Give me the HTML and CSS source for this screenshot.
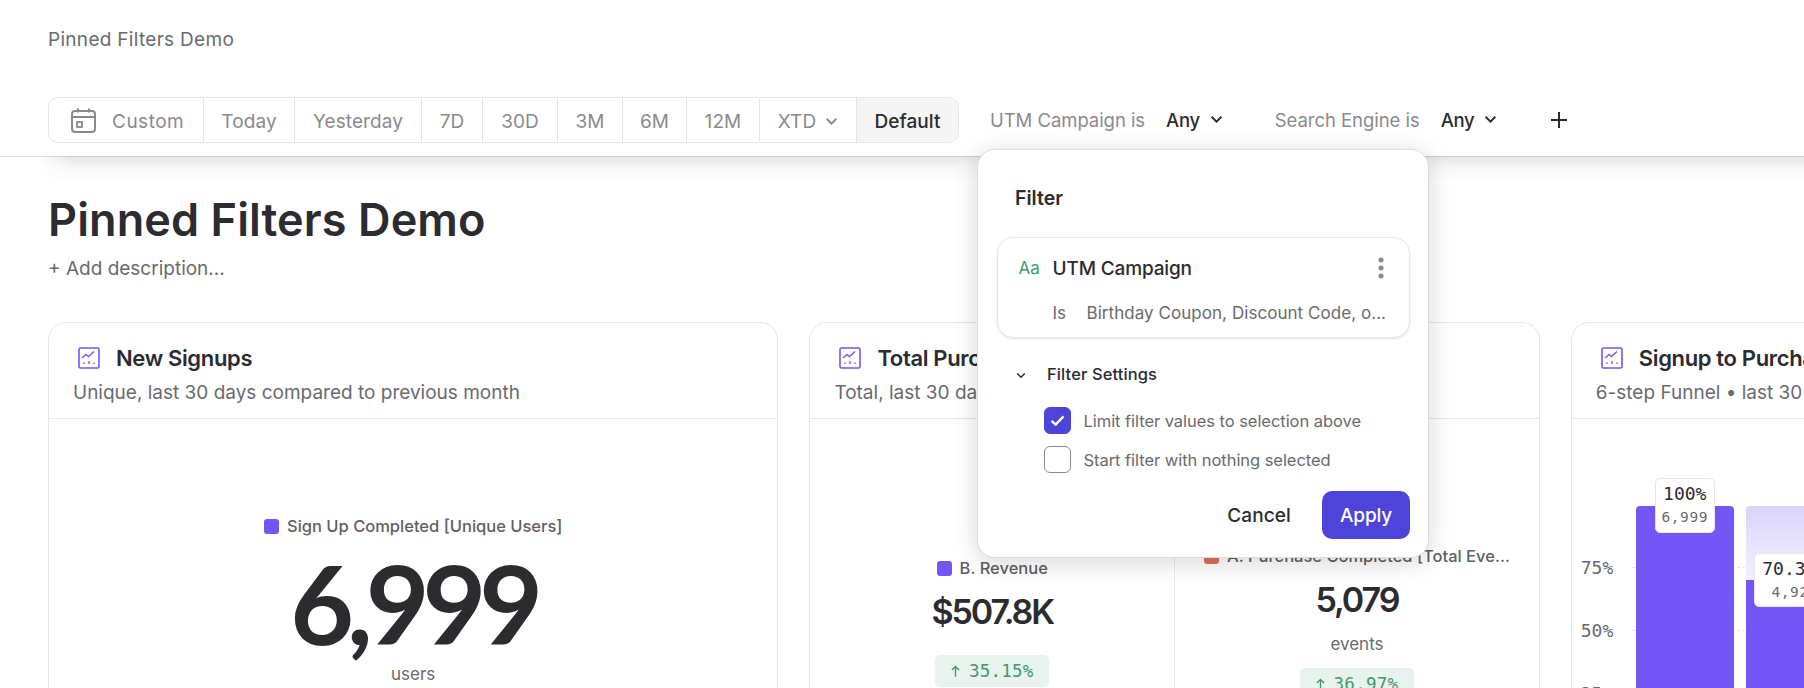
FILE: index.html
```html
<!DOCTYPE html>
<html lang="en">
<head>
<meta charset="utf-8">
<title>Pinned Filters Demo</title>
<link rel="stylesheet" href="styles.css">
</head>
<body>
<header class="topbar">
  <div class="crumb">Pinned Filters Demo</div>
  <div class="toolbar">
    <div class="dates">
      <div class="seg seg-custom">
        <svg class="cal" viewBox="0 0 25 25" fill="none" stroke="currentColor" stroke-width="2"><rect x="1" y="3" width="23" height="21" rx="3"/><path d="M1 9h23M7 0.5v4M18 0.5v4"/><rect x="6" y="14" width="5" height="5" stroke-width="1.8"/></svg>
        <span>Custom</span>
      </div>
      <div class="seg w-today">Today</div>
      <div class="seg w-yest">Yesterday</div>
      <div class="seg w-7d">7D</div>
      <div class="seg w-30d">30D</div>
      <div class="seg w-3m">3M</div>
      <div class="seg w-6m">6M</div>
      <div class="seg w-12m">12M</div>
      <div class="seg w-xtd">XTD
        <svg class="chev-sm" viewBox="0 0 12 8" fill="none" stroke="currentColor" stroke-width="1.800"><path d="M1.5 1.5 6 6l4.5-4.5"/></svg>
      </div>
      <div class="seg seg-default">Default</div>
    </div>
    <div class="pin pin-utm">
      <span class="pin-label">UTM Campaign is</span>
      <span class="pin-val">Any</span>
      <svg class="chev" viewBox="0 0 12 8" fill="none" stroke="currentColor" stroke-width="1.800"><path d="M1.5 1.5 6 6l4.5-4.5"/></svg>
    </div>
    <div class="pin pin-search">
      <span class="pin-label">Search Engine is</span>
      <span class="pin-val">Any</span>
      <svg class="chev" viewBox="0 0 12 8" fill="none" stroke="currentColor" stroke-width="1.800"><path d="M1.5 1.5 6 6l4.5-4.5"/></svg>
    </div>
    <svg class="plus" viewBox="0 0 18 18" fill="none" stroke="currentColor" stroke-width="2"><path d="M9 1v16M1 9h16"/></svg>
  </div>
</header>

<main class="page">
  <h1 class="title">Pinned Filters Demo</h1>
  <div class="desc">+ Add description...</div>

  <div class="cards">
    <section class="card">
      <div class="card-head">
        <div class="card-title">
          <svg class="chart-ic" viewBox="0 0 22 22" fill="none" stroke="#7356f5"><rect x="1" y="1" width="20" height="20" rx="1.5" stroke-width="1.6"/><path d="M4 11l4-3.500 2.500 2L16 4.500" stroke-width="1.4"/><path d="M6 17v-1.500M11 17v-3M16 17v-1.500" stroke-width="1.4"/></svg>
          <span>New Signups</span>
        </div>
        <div class="card-sub">Unique, last 30 days compared to previous month</div>
      </div>
      <div class="card-body single">
        <div class="legend"><i class="sq sq-purple"></i>Sign Up Completed [Unique Users]</div>
        <div class="big">6,999</div>
        <div class="unit">users</div>
      </div>
    </section>

    <section class="card">
      <div class="card-head">
        <div class="card-title">
          <svg class="chart-ic" viewBox="0 0 22 22" fill="none" stroke="#7356f5"><rect x="1" y="1" width="20" height="20" rx="1.5" stroke-width="1.6"/><path d="M4 11l4-3.500 2.500 2L16 4.500" stroke-width="1.4"/><path d="M6 17v-1.500M11 17v-3M16 17v-1.500" stroke-width="1.4"/></svg>
          <span>Total Purchases &amp; Revenue</span>
        </div>
        <div class="card-sub">Total, last 30 days compared to previous month</div>
      </div>
      <div class="card-body split">
        <div class="col col-left">
          <div class="legend"><i class="sq sq-purple"></i>B. Revenue</div>
          <div class="mid">$507.8K</div>
          <div class="delta d-left"><svg class="up" viewBox="0 0 10 13" fill="none" stroke="currentColor" stroke-width="1.500"><path d="M5 13V1.500M1 5.500l4-4 4 4"/></svg>35.15%</div>
        </div>
        <div class="col col-right">
          <div class="legend"><i class="sq sq-red"></i><span class="clip">A. Purchase Completed [Total Eve...</span></div>
          <div class="mid">5,079</div>
          <div class="unit unit-sm">events</div>
          <div class="delta d-right"><svg class="up" viewBox="0 0 10 13" fill="none" stroke="currentColor" stroke-width="1.500"><path d="M5 13V1.500M1 5.500l4-4 4 4"/></svg>36.97%</div>
        </div>
      </div>
    </section>

    <section class="card">
      <div class="card-head">
        <div class="card-title">
          <svg class="chart-ic" viewBox="0 0 22 22" fill="none" stroke="#7356f5"><rect x="1" y="1" width="20" height="20" rx="1.5" stroke-width="1.6"/><path d="M4 11l4-3.500 2.500 2L16 4.500" stroke-width="1.4"/><path d="M6 17v-1.500M11 17v-3M16 17v-1.500" stroke-width="1.4"/></svg>
          <span>Signup to Purchase Funnel</span>
        </div>
        <div class="card-sub">6-step Funnel • last 30 days</div>
      </div>
      <div class="card-body funnel">
        <div class="axis">
          <span class="tick t75">75%</span>
          <span class="tick t50">50%</span>
          <span class="tick t25">25%</span>
        </div>
        <div class="plot">
          <div class="grid g75"></div>
          <div class="grid g50"></div>
          <div class="bar bar1">
            <div class="tip tip1"><b>100%</b><small>6,999</small></div>
          </div>
          <div class="bar bar2">
            <div class="ghost"></div>
            <div class="solid"></div>
            <div class="tip tip2"><b>70.35%</b><small>4,924</small></div>
          </div>
        </div>
      </div>
    </section>
  </div>
</main>

<aside class="pop">
  <div class="pop-title">Filter</div>
  <div class="fcard">
    <div class="frow">
      <span class="aa">Aa</span>
      <span class="fname">UTM Campaign</span>
      <svg class="dots" viewBox="0 0 6 22" fill="#8a8a8e"><circle cx="3" cy="3" r="2.500"/><circle cx="3" cy="11" r="2.500"/><circle cx="3" cy="19" r="2.500"/></svg>
    </div>
    <div class="frow2"><span class="is">Is</span><span class="vals">Birthday Coupon, Discount Code, o...</span></div>
  </div>
  <div class="fset">
    <svg class="chev-xs" viewBox="0 0 12 8" fill="none" stroke="currentColor" stroke-width="1.800"><path d="M1.500 1.500 6 6l4.500-4.500"/></svg>
    <span>Filter Settings</span>
  </div>
  <div class="opt opt-first">
    <span class="box on"><svg viewBox="0 0 16 12" fill="none" stroke="#fff" stroke-width="2.600"><path d="M1.500 6.500 6 10.500l8.500-9"/></svg></span>
    <span>Limit filter values to selection above</span>
  </div>
  <div class="opt">
    <span class="box"></span>
    <span>Start filter with nothing selected</span>
  </div>
  <div class="actions">
    <span class="cancel">Cancel</span>
    <span class="apply">Apply</span>
  </div>
</aside>
</body>
</html>
```
FILE: styles.css
```css
* { box-sizing: border-box; }
html, body { margin: 0; padding: 0; height: 688px; overflow: hidden; background: #fff; }
body { font-family: Inter, "Liberation Sans", sans-serif; color: #2b2b30; width: 1804px; position: relative; }

.topbar { height: 157px; padding: 0 0 0 48px; border-bottom: 1px solid #e2e2e4; background: #fff; position: relative; z-index: 1; }
.topbar::after { content: ""; position: absolute; left: 36px; right: 0; top: 100%; height: 26px; background: linear-gradient(rgba(0,0,0,.1), rgba(0,0,0,.03) 45%, transparent); -webkit-mask-image: linear-gradient(90deg, transparent, #000 34px); mask-image: linear-gradient(90deg, transparent, #000 34px); }
.crumb { height: 97px; padding-top: 28px; font-size: 19px; line-height: 24px; color: #6a6a6e; letter-spacing: .3px; }
.toolbar { display: flex; align-items: center; height: 46px; }

.dates { display: flex; width: 911px; height: 46px; border: 1px solid #e6e6e8; border-radius: 10px; overflow: hidden; font-size: 19px; color: #8a8a8e; flex: none; }
.seg { display: flex; align-items: center; justify-content: center; border-right: 1px solid #e6e6e8; letter-spacing: .1px; flex: none; padding-top: 2px; }
.seg-custom { width: 155px; gap: 16px; justify-content: flex-start; padding-left: 22px; padding-top: 0; }
.seg-custom span { letter-spacing: .5px; padding-top: 2px; }
.cal { width: 25px; height: 25px; flex: none; }
.w-today { width: 91px; }
.w-yest { width: 127px; }
.w-7d { width: 61px; }
.w-30d { width: 75px; }
.w-3m { width: 65px; }
.w-6m { width: 64px; }
.w-12m { width: 73px; }
.w-xtd { width: 97px; gap: 9px; }
.seg-default { flex: 1; background: #f5f5f6; color: #2b2b30; border-right: 0; font-weight: 500; }
.chev-sm { width: 13px; height: 9px; }

.pin { display: flex; align-items: center; font-size: 18.500px; flex: none; margin-top: -1px; }
.pin-label { color: #8a8a8e; letter-spacing: -.05px; }
.pin-val { color: #2b2b30; margin-left: 21px; font-weight: 500; letter-spacing: -.3px; }
.chev { width: 13px; height: 9px; margin-left: 10px; color: #2b2b30; }
.pin-utm { margin-left: 31px; }
.pin-search { margin-left: 52px; }
.plus { width: 18px; height: 18px; margin-left: 53px; color: #2b2b30; margin-top: -1px; }

.page { padding: 0 0 0 48px; }
.title { margin: 0; padding-top: 36px; font-size: 45px; line-height: 54px; font-weight: 600; letter-spacing: .1px; color: #2b2b30; }
.desc { margin-top: 10px; font-size: 19px; line-height: 24px; color: #6a6a6e; letter-spacing: 0; }

.cards { display: flex; gap: 31px; margin-top: 41px; width: 2300px; }
.card { width: 730.400px; height: 500px; border: 1px solid #e6e6e8; border-radius: 18px; flex: none; background: #fff; }
.card-head { height: 96px; border-bottom: 1px solid #e6e6e8; padding: 17px 0 0 24px; overflow: hidden; }
.card-title { display: flex; align-items: center; gap: 16px; padding-left: 5px; height: 36px; font-size: 22px; font-weight: 600; letter-spacing: -.35px; }
.chart-ic { width: 22px; height: 22px; flex: none; }
.card-sub { margin-top: 5px; font-size: 19px; line-height: 24px; color: #6a6a6e; letter-spacing: 0; white-space: nowrap; }

.legend { display: flex; align-items: center; justify-content: center; gap: 8px; font-size: 16.500px; line-height: 24px; color: #5f5f64; letter-spacing: 0; white-space: nowrap; font-weight: 500; }
.sq { width: 15px; height: 15px; border-radius: 3px; flex: none; }
.sq-purple { background: #7356f5; }
.sq-red { background: #e0705a; }

.single { text-align: center; padding-top: 95px; }
.big { font-family: Lato, Inter, sans-serif; font-size: 110px; line-height: 128px; font-weight: 700; letter-spacing: -7px; color: #2b2b30; margin-top: 0; }
.unit { font-size: 17px; line-height: 24px; color: #6a6a6e; }
.single .unit { margin-top: -4px; }

.split { display: flex; }
.col { flex: 1; height: 400px; text-align: center; }
.col-left { padding-top: 137px; border-right: 1px solid #ececee; }
.col-right { padding-top: 125px; }
.mid { font-size: 34px; line-height: 44px; font-weight: 600; letter-spacing: -2.100px; margin-top: 10px; color: #2b2b30; }
.col-right .legend { justify-content: flex-start; padding-left: 29px; }
.unit-sm { margin-top: 10px; }
.delta { display: flex; align-items: center; justify-content: center; gap: 9px; margin: 0 auto; font-family: "DejaVu Sans Mono", monospace; font-size: 17.500px; letter-spacing: .25px; line-height: 32px; height: 32px; color: #3f9a6c; background: #e9f3ee; border-radius: 5px; }
.up { width: 9px; height: 12px; flex: none; }
.d-left { width: 114px; margin-top: 21px; }
.d-right { width: 114px; margin-top: 12px; }

.funnel { position: relative; display: flex; height: 400px; }
.axis { width: 60px; flex: none; position: relative; }
.tick { position: absolute; left: 9px; font-family: "DejaVu Sans Mono", monospace; font-size: 18px; line-height: 20px; color: #6a6a6e; }
.t75 { top: 139px; }
.t50 { top: 202px; }
.t25 { top: 265px; }
.plot { position: relative; flex: 1; display: flex; gap: 12px; padding-left: 4px; padding-top: 87px; }
.grid { position: absolute; left: 0; right: 0; border-top: 1px dashed #e6e6e8; }
.g75 { top: 148px; }
.g50 { top: 211px; }
.bar { position: relative; width: 98px; flex: none; height: 313px; border-radius: 4px 4px 0 0; }
.bar1 { background: #7356f5; }
.ghost { position: absolute; left: 0; right: 0; top: 0; height: 74px; border-radius: 4px 4px 0 0; background: linear-gradient(#d9d3fb, #f4f2fe); }
.solid { position: absolute; left: 0; right: 0; top: 74px; bottom: 0; background: #7356f5; }
.tip { position: absolute; background: #fff; border: 1px solid #e6e6e8; border-radius: 5px; font-family: "DejaVu Sans Mono", monospace; text-align: center; }
.tip b { display: block; font-weight: 400; font-size: 18px; line-height: 24px; color: #2b2b30; }
.tip small { display: block; font-size: 14.500px; line-height: 22px; color: #6a6a6e; letter-spacing: .6px; }
.tip1 { left: 19px; top: -28px; width: 60px; height: 55px; padding-top: 3px; }
.tip2 { left: 8px; top: 47px; width: 82px; height: 54px; padding-top: 3px; }

.pop { position: absolute; left: 977px; top: 149px; width: 452px; height: 409px; background: #fff; border: 1px solid #dcdcde; border-radius: 18px; box-shadow: 0 4px 24px rgba(0,0,0,.17); z-index: 5; padding: 0 18px 0 18.500px; }
.pop-title { padding: 35px 0 0 18.500px; font-size: 19.500px; line-height: 26px; font-weight: 600; letter-spacing: 0; }
.fcard { margin-top: 26px; height: 101px; border: 1px solid #e6e6e8; border-radius: 16px; box-shadow: 0 1px 2px rgba(0,0,0,.12); padding: 0 0 0 21px; }
.frow { display: flex; align-items: center; height: 60px; }
.aa { width: 34px; font-size: 17px; color: #3f9a6c; }
.fname { flex: 1; font-size: 19px; font-weight: 500; letter-spacing: -.15px; }
.dots { width: 6px; height: 22px; margin-right: 25px; }
.frow2 { display: flex; padding-left: 34px; font-size: 17px; line-height: 24px; color: #6a6a6e; letter-spacing: .05px; margin-top: 3px; }
.is { width: 34px; }
.fset { display: flex; align-items: center; margin: 24px 0 0 19px; height: 24px; font-size: 16.500px; font-weight: 500; color: #2b2b30; gap: 21.500px; letter-spacing: .1px; }
.chev-xs { width: 10px; height: 7px; margin-top: 3px; }
.opt { display: flex; align-items: center; gap: 13px; margin-left: 47px; height: 27px; margin-top: 12px; font-size: 16.500px; color: #6a6a6e; letter-spacing: -.05px; }
.opt-first { margin-top: 21px; }
.box { display: flex; align-items: center; justify-content: center; width: 27px; height: 27px; border: 1px solid #8a8a8e; border-radius: 6px; flex: none; }
.box.on { background: #4d44d9; border-color: #4d44d9; }
.box svg { width: 15px; height: 11px; }
.actions { display: flex; align-items: center; justify-content: flex-end; gap: 31px; margin-top: 18px; }
.cancel { font-size: 19px; font-weight: 500; color: #2b2b30; letter-spacing: .1px; }
.apply { display: flex; align-items: center; justify-content: center; width: 88px; height: 48px; border-radius: 10px; background: #4d44d9; color: #fff; font-size: 19px; font-weight: 500; letter-spacing: -.2px; }
```
